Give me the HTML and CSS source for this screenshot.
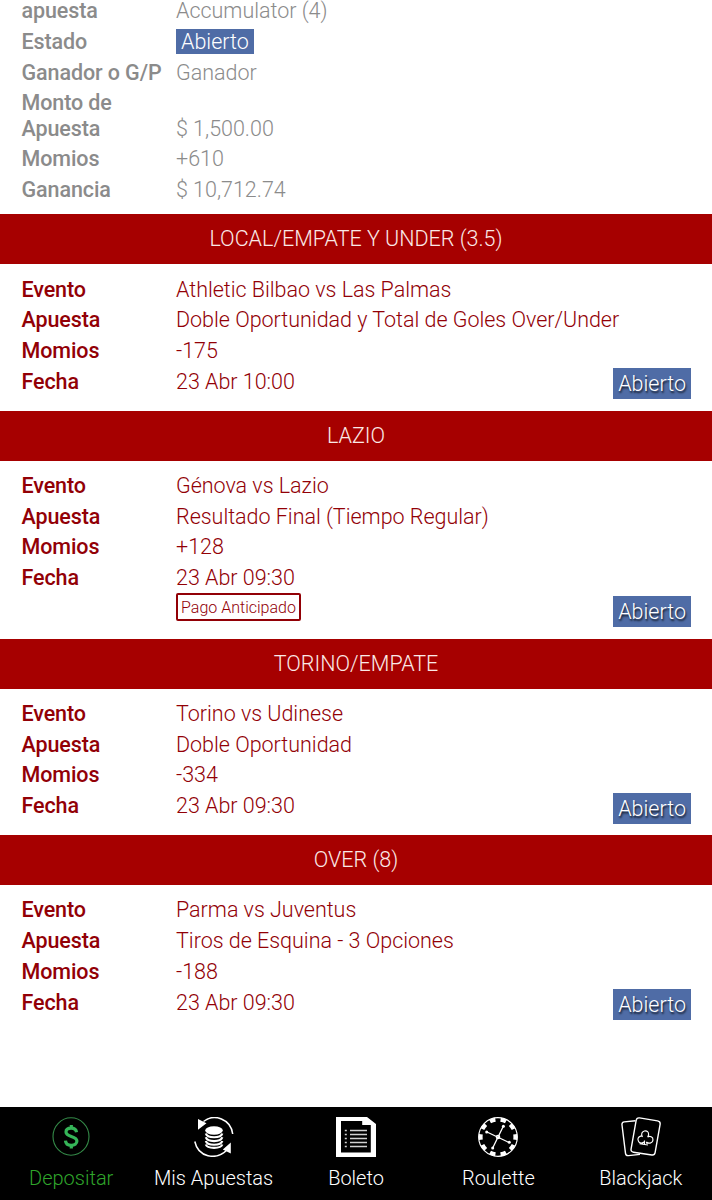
FILE: index.html
```html
<!DOCTYPE html>
<html lang="es">
  <head>
    <meta charset="UTF-8" />
    <meta name="viewport" content="width=device-width, initial-scale=1.0" />
    <title>Mis Apuestas</title>
    <link rel="stylesheet" href="styles.css">
  </head>
  <body>
    <main>
      <dl class="summary">
        <div class="row first"><dt>apuesta</dt><dd>Accumulator (4)</dd></div>
        <div class="row"><dt>Estado</dt><dd><span class="state">Abierto</span></dd></div>
        <div class="row"><dt>Ganador o G/P</dt><dd>Ganador</dd></div>
        <div class="row"><dt>Monto de<br>Apuesta</dt><dd>$ 1,500.00</dd></div>
        <div class="row"><dt>Momios</dt><dd>+610</dd></div>
        <div class="row"><dt>Ganancia</dt><dd>$ 10,712.74</dd></div>
      </dl>

      <section class="bet">
        <h2>LOCAL/EMPATE Y UNDER (3.5)</h2>
        <dl>
          <div class="row"><dt>Evento</dt><dd>Athletic Bilbao vs Las Palmas</dd></div>
          <div class="row"><dt>Apuesta</dt><dd>Doble Oportunidad y Total de Goles Over/Under</dd></div>
          <div class="row"><dt>Momios</dt><dd>-175</dd></div>
          <div class="row"><dt>Fecha</dt><dd>23 Abr 10:00</dd></div>
        </dl>
        <span class="badge">Abierto</span>
      </section>

      <section class="bet">
        <h2>LAZIO</h2>
        <dl>
          <div class="row"><dt>Evento</dt><dd>Génova vs Lazio</dd></div>
          <div class="row"><dt>Apuesta</dt><dd>Resultado Final (Tiempo Regular)</dd></div>
          <div class="row"><dt>Momios</dt><dd>+128</dd></div>
          <div class="row"><dt>Fecha</dt><dd>23 Abr 09:30</dd></div>
        </dl>
        <span class="early">Pago Anticipado</span>
        <span class="badge">Abierto</span>
      </section>

      <section class="bet">
        <h2>TORINO/EMPATE</h2>
        <dl>
          <div class="row"><dt>Evento</dt><dd>Torino vs Udinese</dd></div>
          <div class="row"><dt>Apuesta</dt><dd>Doble Oportunidad</dd></div>
          <div class="row"><dt>Momios</dt><dd>-334</dd></div>
          <div class="row"><dt>Fecha</dt><dd>23 Abr 09:30</dd></div>
        </dl>
        <span class="badge">Abierto</span>
      </section>

      <section class="bet">
        <h2>OVER (8)</h2>
        <dl>
          <div class="row"><dt>Evento</dt><dd>Parma vs Juventus</dd></div>
          <div class="row"><dt>Apuesta</dt><dd>Tiros de Esquina - 3 Opciones</dd></div>
          <div class="row"><dt>Momios</dt><dd>-188</dd></div>
          <div class="row"><dt>Fecha</dt><dd>23 Abr 09:30</dd></div>
        </dl>
        <span class="badge">Abierto</span>
      </section>
    </main>

    <nav>
      <a class="active">
        <svg viewBox="0 0 40 40" fill="none" stroke="currentColor">
          <ellipse cx="20" cy="19.500" rx="18" ry="18.700" stroke="#348a48" stroke-width="1.100" />
          <path d="M25.500 15.300c-.3-2.600-2.400-4.100-5.300-4.100-3.200 0-5.200 1.600-5.200 3.900 0 5.500 10.900 3.100 10.900 9 0 2.600-2.400 4.200-5.600 4.200-3.400 0-5.600-1.700-5.800-4.700M20.300 8v3M20.300 28.500v3" stroke="#35b558" stroke-width="3.200" />
        </svg>
        <span>Depositar</span>
      </a>
      <a>
        <svg viewBox="0 0 40 40" fill="none" stroke="currentColor">
          <path d="M9.500 4.500C20-4 37 2 38.700 17M.8 24.500C4 40 22 44 33 33" stroke-width="1.500" />
          <path d="M4 2l8.500 4.300-8.500 6.500zM36.800 25.500v11l-8-4z" fill="currentColor" stroke="none" />
          <ellipse cx="20" cy="13.500" rx="8.800" ry="4.200" fill="currentColor" stroke="none" />
          <path d="M11.800 16.500c1.500 5 15 5 16.500 0M11.800 20.300c1.500 5 15 5 16.500 0M11.800 24c1.500 5 15 5 16.500 0M11.800 27.500c1.500 4.500 15 4.500 16.500 0" stroke-width="2.200" />
        </svg>
        <span>Mis Apuestas</span>
      </a>
      <a>
        <svg viewBox="0 0 40 40">
          <path fill="currentColor" fill-rule="evenodd" d="M0 0h31l9 7v33H0zM5 4v31.500h29.800V8h-8.600V4z" />
          <path d="M8.800 13.500h2M8.800 17.500h2M8.800 21.500h2M8.800 25.500h2M8.800 29.500h2M14 13.500h17M14 17.500h17M14 21.500h17M14 25.500h17M14 29.500h17" stroke="#d0d0d0" stroke-width="1.600" />
        </svg>
        <span>Boleto</span>
      </a>
      <a>
        <svg viewBox="0 0 40 40" fill="none" stroke="currentColor">
          <circle cx="20" cy="20" r="19.300" stroke-width="1.200" />
          <circle cx="20" cy="20" r="17.400" stroke-width="4" pathLength="90" stroke-dasharray="4.600 4.400" stroke-dashoffset="2.300" transform="rotate(180 20 20)" />
          <path d="M25.300 9.300L14.700 31M9 15l22 10.500" stroke-width="1.300" />
          <circle cx="20" cy="20" r="1.700" stroke-width="1.200" />
          <g fill="currentColor" stroke="none"><circle cx="25.400" cy="9.300" r="1.500" /><circle cx="14.700" cy="31" r="1.500" /><circle cx="8.700" cy="14.900" r="1.500" /><circle cx="31.300" cy="25.300" r="1.500" /></g>
        </svg>
        <span>Roulette</span>
      </a>
      <a>
        <svg viewBox="0 0 40 40" fill="none" stroke="currentColor" stroke-width="1.400">
          <path d="M14.500 3.700L3.200 4.900Q.6 5.300 1 8l3.500 28.300q.4 2.600 3 2.300l11.500-1.200" />
          <path d="M18.500.9l18 3q3 .5 2.600 3.400l-5 28.400q-.5 2.700-3.200 2.300L12.500 35.200q-2.900-.4-2.400-3.300l5-28.200Q15.600.5 18.500.9z" />
          <path d="M22.800 25q-3.300 2.200-5.200-.4-2-4 2-5.500 1 0 1.500.2-1.500-4 2.200-5.300 4.500-.6 4.300 3.700-.2 1.400-1 2.200 3-1.300 5 1 1.300 4-2.500 5.200-2.200.3-3.700-1.100l.7 1.900M22.800 25l-1.500 1.500M18.500 26.800l8.500 1.200M23.500 23.500v3.500" stroke-width="1.150" />
        </svg>
        <span>Blackjack</span>
      </a>
    </nav>
  </body>
</html>
```
FILE: styles.css
```css
* {
  box-sizing: border-box;
}

body {
  margin: 0;
  height: 1200px;
  display: flex;
  flex-direction: column;
  justify-content: space-between;
  overflow: hidden;
  background-color: #fff;
  font-family: Roboto, "Liberation Sans", sans-serif;
  font-size: 21.5px;
  font-weight: 300;
  line-height: 25.3px;
}

dl,
dd,
h2 {
  margin: 0;
}

.row {
  display: flex;
  align-items: flex-end;
  padding: 2.7px 0;
}

.row.first {
  padding-top: 0;
  margin-top: -1.6px;
}

dt {
  width: 154.5px;
  font-weight: 500;
  letter-spacing: -0.1px;
  white-space: nowrap;
}

dd {
  letter-spacing: -0.02px;
}

.summary {
  padding: 0 21.5px 9px;
  color: #8b8b8b;
}

.state {
  display: inline-block;
  height: 25px;
  padding: 0 5px;
  color: #fff;
  background-color: #4f6ca6;
}

.bet {
  position: relative;
  color: #920006;
}

.bet h2 {
  height: 50px;
  line-height: 50px;
  background-color: #a60000;
  color: #fbe9e7;
  font-size: 21.5px;
  font-weight: 300;
  text-align: center;
}

.bet dl {
  padding: 9.8px 21.5px 0;
}

.bet::after {
  content: "";
  display: block;
  height: 14px;
}

.early {
  display: block;
  width: 125px;
  height: 28px;
  margin: 0 0 3.5px 176px;
  border: 2px solid #920006;
  border-radius: 2px;
  font-size: 16px;
  line-height: 25px;
  text-align: center;
}

.badge {
  position: absolute;
  right: 21px;
  bottom: 11.3px;
  height: 31px;
  padding: 0 5px;
  line-height: 31px;
  color: #fff;
  background-color: #4f6ca6;
  text-shadow: 1px 2px 2px rgba(0, 0, 0, 0.8);
}

nav {
  display: flex;
  height: 93px;
  background-color: #000;
  color: #fff;
  font-size: 20px;
}

nav a {
  flex: 1;
  display: flex;
  flex-direction: column;
  align-items: center;
  gap: 9px;
  padding-top: 9.5px;
}

nav svg {
  width: 40px;
  height: 40px;
}

nav .active {
  color: #2fa52b;
}
```
